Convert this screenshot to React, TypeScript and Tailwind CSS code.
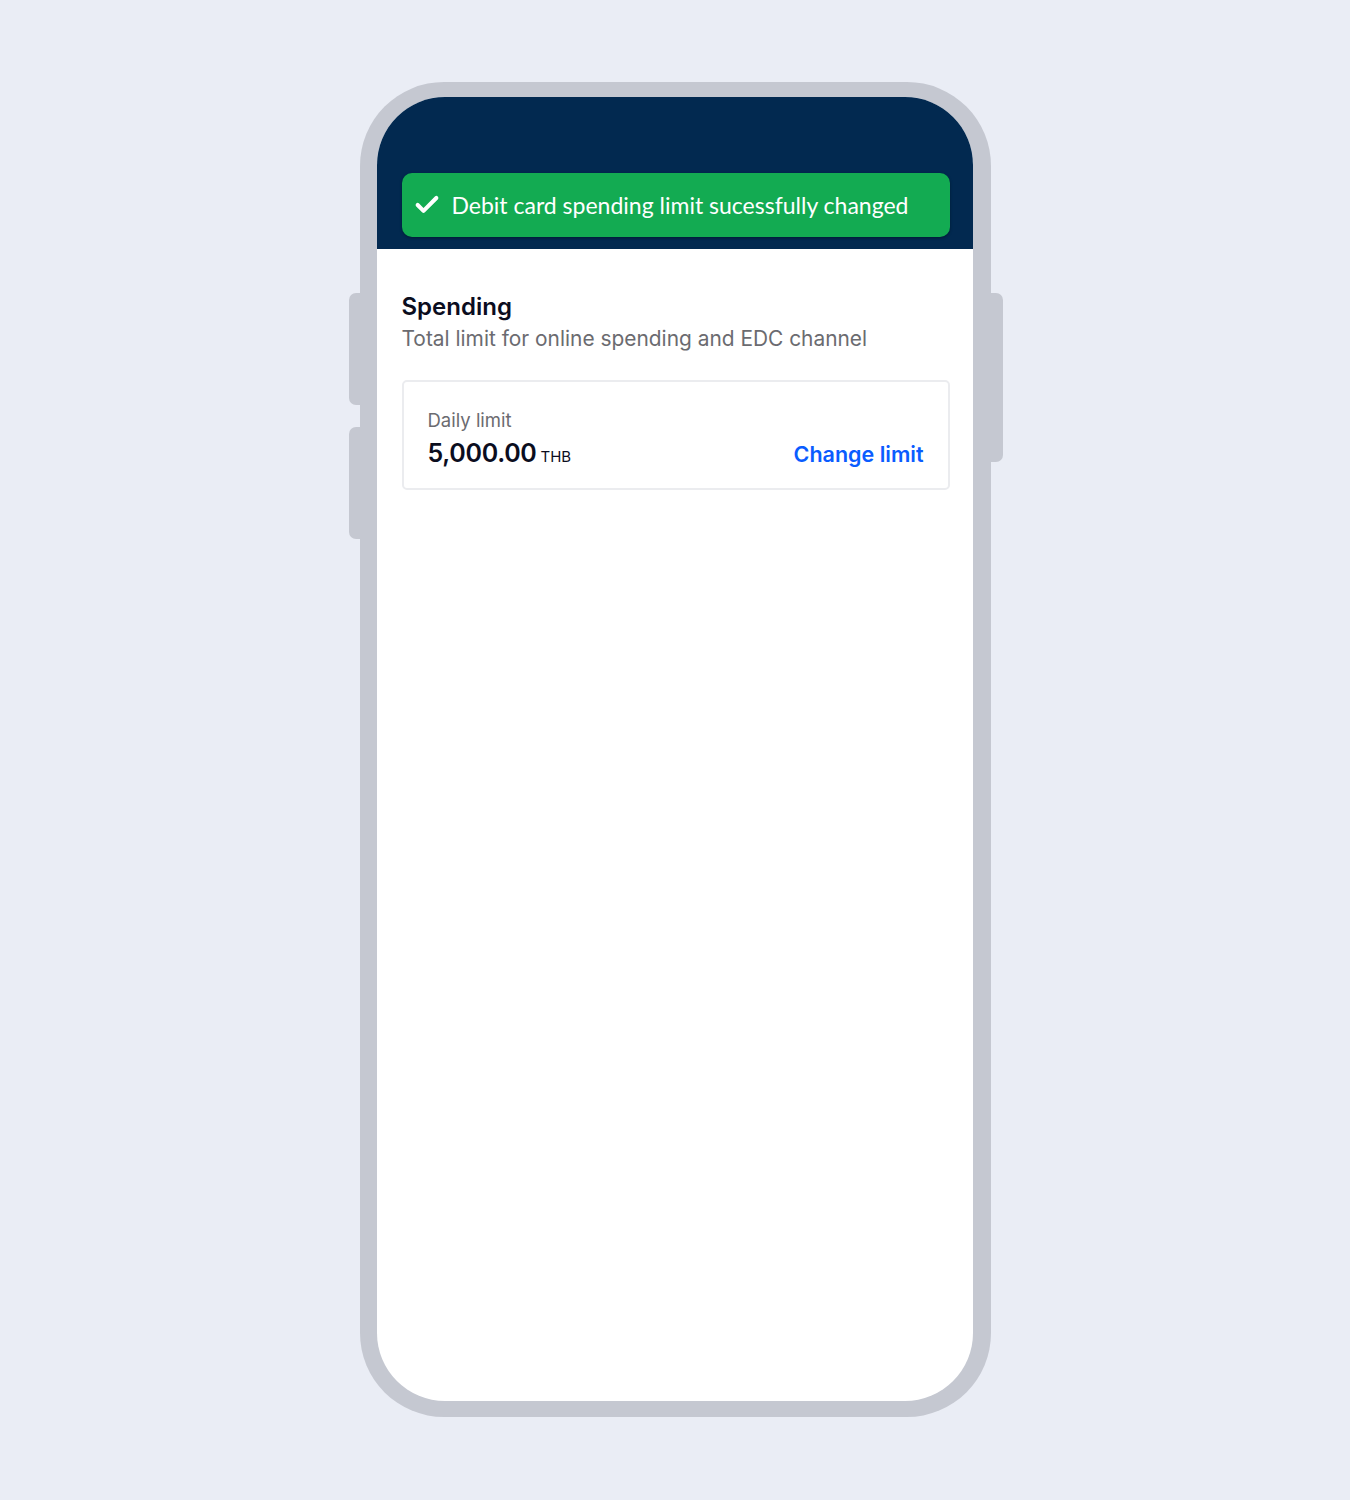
import { Check } from "lucide-react";

const App = () => {
  return (
    <div className="min-h-[1500px] w-full bg-[#eaedf5] flex justify-center pt-[82px] font-['Inter',sans-serif]">
      <div className="relative w-[631px] h-[1335px] rounded-[84px] bg-[#c5c8d1] pl-[17px] pr-[18px] pt-[15px] pb-[16px]">
        {/* side buttons */}
        <div className="absolute left-[-11px] top-[211px] w-[14px] h-[112px] rounded-l-[7px] bg-[#c5c8d1]" />
        <div className="absolute left-[-11px] top-[345px] w-[14px] h-[112px] rounded-l-[7px] bg-[#c5c8d1]" />
        <div className="absolute right-[-12px] top-[211px] w-[14px] h-[169px] rounded-r-[7px] bg-[#c5c8d1]" />

        <div className="flex flex-col w-full h-full bg-white rounded-[68px] overflow-hidden">
          <div className="bg-[#022950] h-[152px] pt-[76px] pl-[25px] pr-[23px]">
            <div className="flex items-center h-[64px] rounded-[10px] bg-[#13ab52] pl-[11px] gap-[11px] shadow-[0_1px_3px_rgba(0,0,0,0.35)]">
              <Check className="text-white" size={28} strokeWidth={3.5} />
              <span className="text-white text-[23px] font-['Lato',sans-serif]">
                Debit card spending limit sucessfully changed
              </span>
            </div>
          </div>

          <div className="flex flex-col pl-[25px] pr-[23px] pt-[43px]">
            <h2 className="text-[24px] leading-[30px] font-semibold text-[#0b0d1e]">Spending</h2>
            <p className="text-[20.9px] leading-[28px] text-[#6b6b70] mt-[3px]">
              Total limit for online spending and EDC channel
            </p>

            <div className="mt-[27px] h-[110px] rounded-[5px] border-2 border-[#ebecef] pl-[24px] pr-[24px] flex items-end justify-between pb-[20px]">
              <div className="flex flex-col">
                <span className="text-[18.5px] leading-[24px] text-[#6b6b70]">Daily limit</span>
                <div className="flex items-baseline gap-[4px] mt-[6px]">
                  <span className="text-[25px] leading-[30px] font-semibold text-[#0b0d1e] tracking-[-0.3px]">5,000.00</span>
                  <span className="text-[15px] text-[#0b0d1e]">THB</span>
                </div>
              </div>
              <span className="text-[21.5px] leading-[30px] font-semibold text-[#0a5cff] mb-[-1px]">Change limit</span>
            </div>
          </div>
        </div>
      </div>
    </div>
  );
};

export default App;
